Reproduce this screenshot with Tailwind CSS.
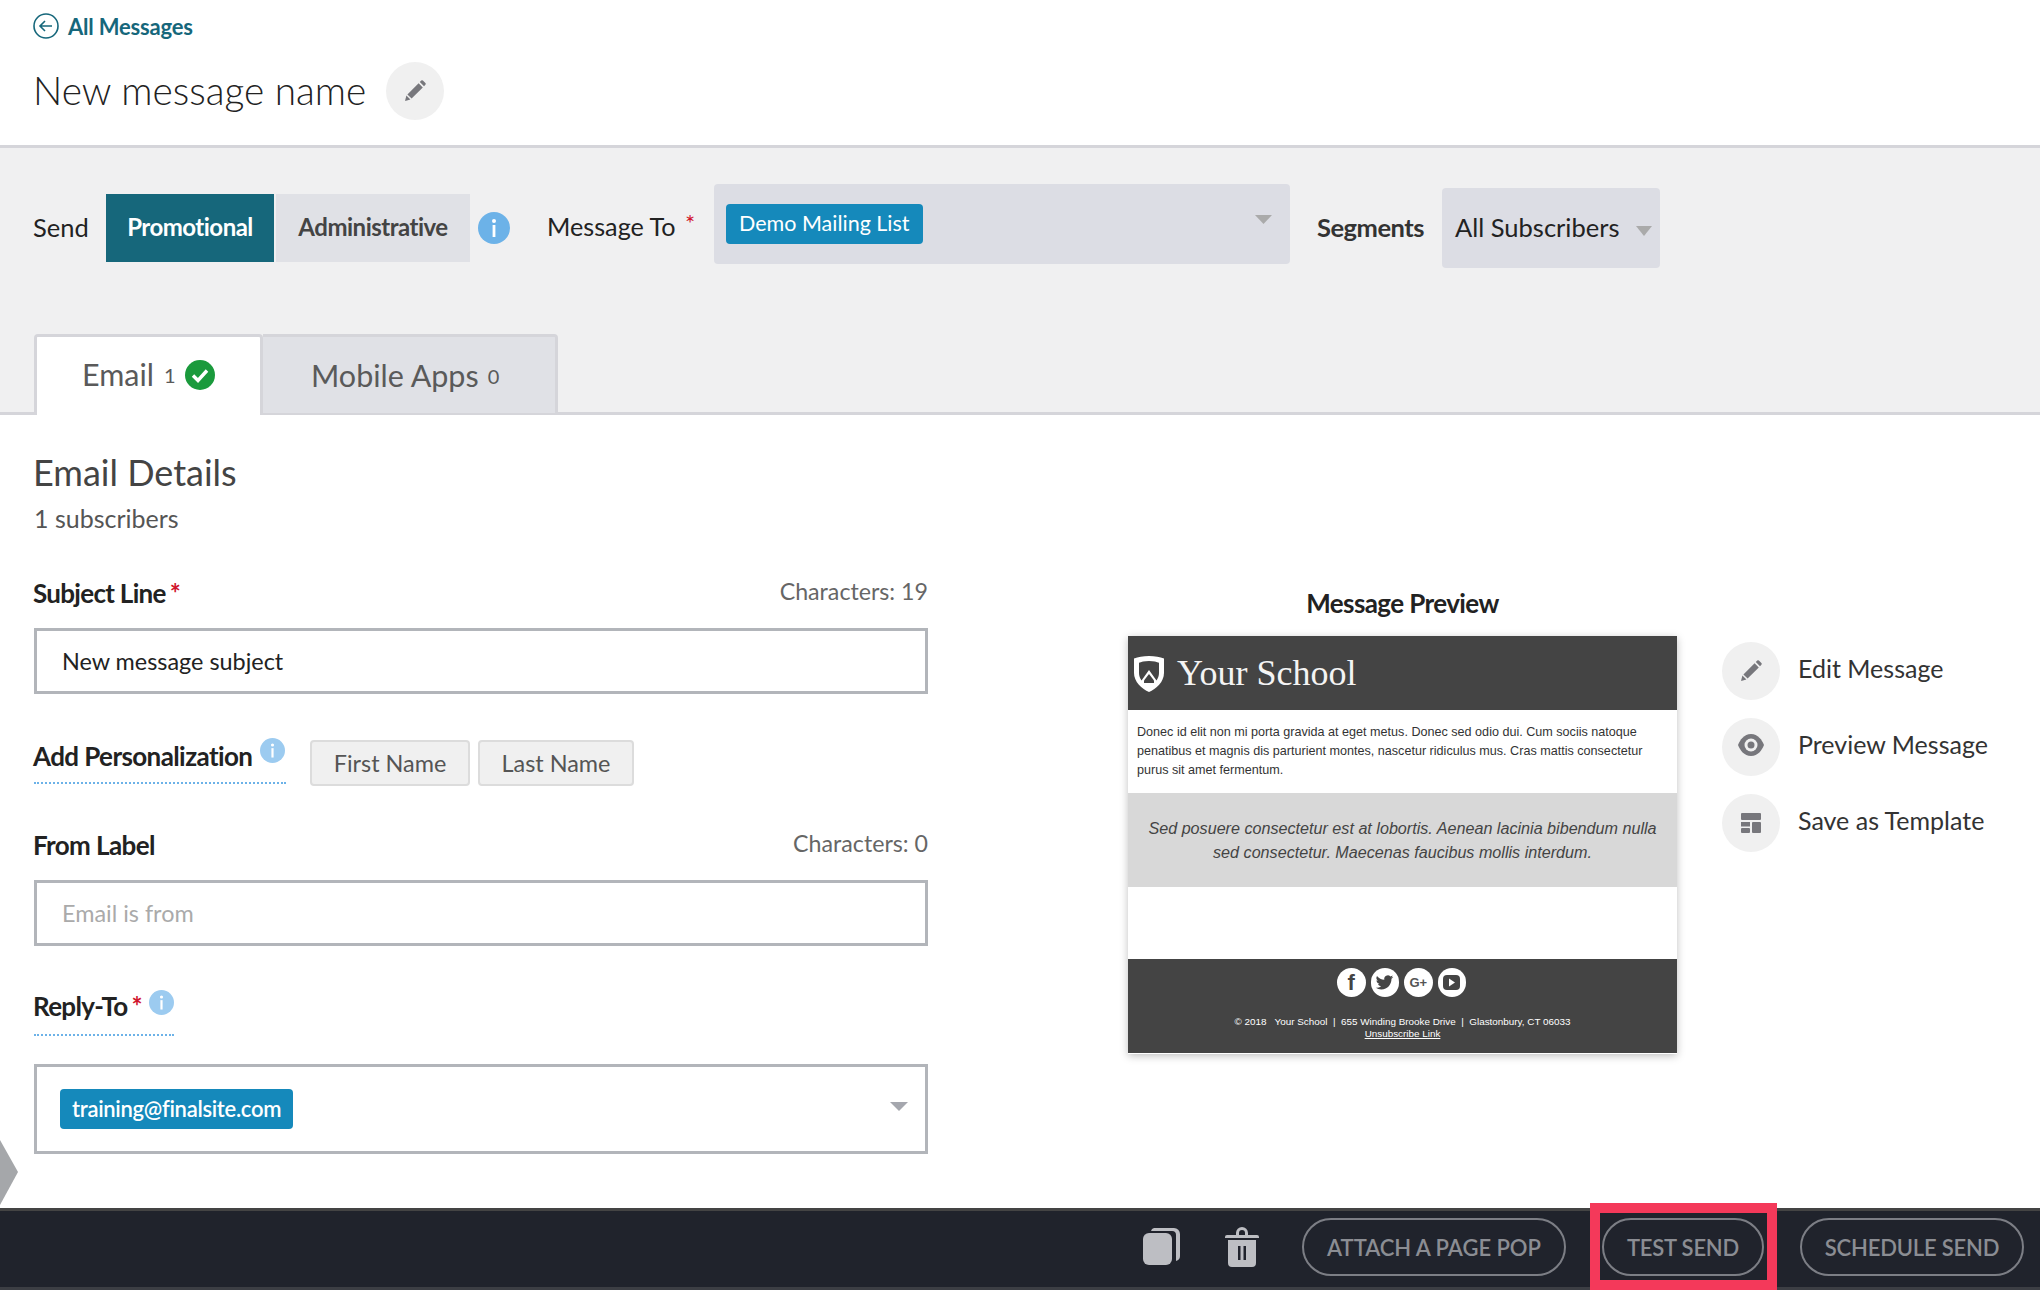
<!DOCTYPE html>
<html lang="en">
  <head>
    <meta charset="UTF-8" />
    <title>New message name</title>
    <script src="https://cdn.jsdelivr.net/npm/@tailwindcss/browser@4"></script>
  </head>
  <body class="bg-white font-['Lato','Liberation_Sans',sans-serif] text-[#333]">
    <div class="relative flex flex-col h-[1290px] overflow-hidden">
      <!-- top title -->
      <header class="h-[148px] shrink-0 border-b-[3px] border-[#d5d5da] pl-[33px]">
        <a class="flex items-center h-[26px] mt-[13px] text-[22px] font-bold text-[#16677b] tracking-[-0.2px]">
          <svg class="w-[26px] h-[26px] mr-[9px]" viewBox="0 0 26 26" fill="none" stroke="#16677b" stroke-width="1.6">
            <circle cx="13" cy="13" r="12" />
            <path d="M19 13H7.5M12 8l-5 5 5 5" />
          </svg>
          All Messages
        </a>
        <div class="flex items-center mt-[23px]">
          <h1 class="text-[38.800px] font-light leading-[58px] text-[#222] w-[353px] whitespace-nowrap -mt-[2px]">New message name</h1>
          <div class="flex items-center justify-center w-[58px] h-[58px] rounded-full bg-[#f0f0f0]">
            <svg class="w-[24px] h-[24px]" viewBox="0 0 24 24" fill="#77777c">
              <path d="M2 22l1.4-5.4 4 4zM4.400 15.400L15.600 4.200l4.200 4.200L8.600 19.600zM16.800 3l1.400-1.400a1.200 1.200 0 0 1 1.700 0l2.500 2.500a1.200 1.200 0 0 1 0 1.700L21 7.200z" />
            </svg>
          </div>
        </div>
      </header>

      <!-- send options -->
      <section class="h-[267px] shrink-0 bg-[#f0f0f1] border-b-[3px] border-[#d5d5da] pt-[40px]">
        <div class="flex items-center h-[80px] pl-[33px] text-[25.500px]">
          <span class="w-[73px] -mt-[2px] text-[#222]">Send</span>
          <div class="flex h-[68px] gap-[2px] text-[24px]">
            <button class="w-[168px] bg-[#16677b] text-white font-bold tracking-[-0.5px] pb-[2px]">Promotional</button>
            <button class="w-[194px] bg-[#e0e1e6] text-[#444] font-bold tracking-[-0.5px] pb-[2px]">Administrative</button>
          </div>
          <svg class="w-[32px] h-[32px] ml-[8px] shrink-0" viewBox="0 0 32 32">
            <circle cx="16" cy="16" r="16" fill="#6cb2e8" />
            <circle cx="16" cy="9" r="2" fill="#fff" />
            <rect x="14.6" y="13" width="2.8" height="12" fill="#fff" />
          </svg>
          <span class="w-[167px] ml-[37px] -mt-[2px] text-[25.200px] text-[#222] whitespace-nowrap">Message To <span class="inline-block text-[#d0142c] text-[24px] leading-none align-top mt-[3px] ml-[3px]">*</span></span>
          <div class="flex items-center justify-between w-[576px] h-[80px] -mt-[8px] pl-[12px] pr-[18px] rounded-[4px] bg-[#dcdde4]">
            <span class="flex items-center h-[40px] px-[13px] pb-[1px] rounded-[4px] bg-[#1589bb] text-white text-[21.500px]">Demo Mailing List</span>
            <svg class="w-[17px] h-[9px] -mt-[10px]" viewBox="0 0 17 9"><path d="M0 0h17L8.5 9z" fill="#aaa" /></svg>
          </div>
          <span class="w-[125px] ml-[27px] -mt-[2px] font-bold text-[#333] tracking-[-0.5px]">Segments</span>
          <div class="flex items-center justify-between w-[218px] h-[80px] pl-[13px] pr-[8px] rounded-[4px] bg-[#dcdde4] text-[#222]">
            <span class="-mt-[2px]">All Subscribers</span>
            <svg class="w-[16px] h-[10px] mt-[6px]" viewBox="0 0 16 10"><path d="M0 0h16L8 10z" fill="#aaa" /></svg>
          </div>
        </div>
        <div class="relative flex mt-[66px] ml-[34px] h-[81px]">
          <div class="flex items-center w-[229px] pl-[45px] pb-[2px] bg-white border-t-[3px] border-x-[3px] border-[#d5d5da] rounded-t-[4px] border-b-0 text-[30.500px] text-[#5a5a5a]">
            Email
            <span class="text-[20px] ml-[10px]">1</span>
            <svg class="w-[30px] h-[30px] ml-[9px]" viewBox="0 0 30 30">
              <circle cx="15" cy="15" r="15" fill="#1a9a3c" />
              <path d="M8 15.5l5 5 9-10" fill="none" stroke="#fff" stroke-width="3.4" />
            </svg>
          </div>
          <div class="flex items-center w-[295px] h-[79px] pl-[48px] pt-[2px] bg-[#e0e1e6] border-t-[3px] border-r-[3px] border-[#d5d5da] rounded-tr-[4px] text-[30.500px] text-[#5a5a5a]">
            Mobile Apps
            <span class="text-[20px] ml-[9px]">0</span>
          </div>
        </div>
      </section>

      <!-- email details -->
      <main class="flex flex-1 pl-[34px]">
        <div class="w-[894px] shrink-0">
          <h2 class="mt-[37px] -ml-[1px] h-[40px] leading-[40px] text-[36px] text-[#444]">Email Details</h2>
          <p class="mt-[11px] h-[30px] leading-[30px] text-[25px] text-[#555]">1 subscribers</p>

          <div class="flex justify-between mt-[45px] h-[30px] leading-[30px]">
            <label class="-ml-[1px] text-[26px] font-bold text-[#222] tracking-[-0.7px]">Subject Line<span class="text-[#d0142c] ml-[4px]">*</span></label>
            <span class="-mt-[2px] text-[23.200px] text-[#666]">Characters: 19</span>
          </div>
          <div class="flex items-center h-[66px] mt-[20px] pl-[25px] pt-[2px] border-[3px] border-[#b2b5ba] text-[23.400px] text-[#222]">New message subject</div>

          <div class="flex mt-[44px] h-[48px]">
            <div class="flex items-start w-[252px] h-[46px] border-b-2 border-dotted border-[#6cb2e8]">
              <span class="-ml-[1px] mt-[2px] leading-[32px] text-[26px] font-bold text-[#222] tracking-[-0.6px] whitespace-nowrap">Add Personalization</span>
              <svg class="w-[25px] h-[25px] ml-[8px] shrink-0" viewBox="0 0 32 32">
                <circle cx="16" cy="16" r="16" fill="#9ccbf0" />
                <circle cx="16" cy="9" r="2" fill="#fff" />
                <rect x="14.6" y="13" width="2.8" height="12" fill="#fff" />
              </svg>
            </div>
            <div class="flex gap-[8px] ml-[24px] mt-[2px] h-[46px] text-[23.400px] text-[#555]">
              <button class="w-[160px] pt-[1px] bg-[#f0f0f0] border-2 border-[#dcdcdc] rounded-[4px]">First Name</button>
              <button class="w-[156px] pt-[1px] bg-[#f0f0f0] border-2 border-[#dcdcdc] rounded-[4px]">Last Name</button>
            </div>
          </div>

          <div class="flex justify-between mt-[44px] h-[30px] leading-[30px]">
            <label class="-ml-[1px] text-[26px] font-bold text-[#222] tracking-[-0.6px]">From Label</label>
            <span class="-mt-[2px] text-[23.200px] text-[#666]">Characters: 0</span>
          </div>
          <div class="flex items-center h-[66px] mt-[20px] pl-[25px] pt-[2px] border-[3px] border-[#b2b5ba] text-[23.400px] text-[#aaa]">Email is from</div>

          <div class="flex items-start w-[140px] h-[46px] mt-[44px] border-b-2 border-dotted border-[#6cb2e8]">
            <label class="-ml-[1px] leading-[32px] text-[26px] font-bold text-[#222] tracking-[-0.7px] whitespace-nowrap">Reply-To<span class="text-[#d0142c] ml-[4px]">*</span></label>
            <svg class="w-[25px] h-[25px] ml-[7px] shrink-0" viewBox="0 0 32 32">
              <circle cx="16" cy="16" r="16" fill="#9ccbf0" />
              <circle cx="16" cy="9" r="2" fill="#fff" />
              <rect x="14.6" y="13" width="2.8" height="12" fill="#fff" />
            </svg>
          </div>
          <div class="flex items-center justify-between h-[90px] mt-[28px] pl-[23px] pr-[17px] border-[3px] border-[#b2b5ba]">
            <span class="flex items-center h-[40px] px-[12px] pb-[2px] rounded-[4px] bg-[#1589bb] text-white text-[22px] font-semibold tracking-[-0.3px]">training@finalsite.com</span>
            <svg class="w-[18px] h-[9px] -mt-[6px]" viewBox="0 0 18 9"><path d="M0 0h18L9 9z" fill="#a5a7ae" /></svg>
          </div>
        </div>

        <!-- preview -->
        <div class="w-[549px] ml-[200px] shrink-0 pt-[173px]">
          <h3 class="h-[30px] leading-[30px] text-center text-[26px] font-bold text-[#222] tracking-[-0.6px]">Message Preview</h3>
          <div class="mt-[18px] h-[418px] bg-white shadow-[0_2px_8px_rgba(0,0,0,0.25)] font-['Liberation_Sans',sans-serif]">
            <div class="flex items-center h-[74px] pl-[5px] bg-[#444]">
              <svg class="w-[32px] h-[38px] mt-[1px]" viewBox="0 0 32 38">
                <path d="M16 1C10 1 5 2 1 3.500V18c0 9 8 16 15 19 7-3 15-10 15-19V3.500C27 2 22 1 16 1z" fill="#fff" />
                <path d="M16 6c-4.600 0-8 1-10 1.800V18c0 3 1 5 2.500 7.500L16 15l7.500 10.500C25 23 26 21 26 18V7.800C24 7 20.600 6 16 6z" fill="#444" />
                <path d="M16 19l5 6.500v2.500h-10v-2.500z" fill="#444" />
              </svg>
              <span class="ml-[12px] font-['Liberation_Serif',serif] text-[36px] text-[#f4f4f4]">Your School</span>
            </div>
            <div class="h-[83px] px-[9px] pt-[13px] text-[12.600px] leading-[19px] text-[#333]">
              Donec id elit non mi porta gravida at eget metus. Donec sed odio dui. Cum sociis natoque penatibus et magnis dis parturient montes, nascetur ridiculus mus. Cras mattis consectetur purus sit amet fermentum.
            </div>
            <div class="h-[94px] px-[12px] pt-[23px] bg-[#d8d8d8] text-center text-[16.150px] leading-[24px] italic text-[#444]">
              Sed posuere consectetur est at lobortis. Aenean lacinia bibendum nulla sed consectetur. Maecenas faucibus mollis interdum.
            </div>
            <div class="h-[72px]"></div>
            <div class="flex flex-col items-center h-[94px] pt-[9px] bg-[#444] text-white text-[9.900px] leading-[12px]">
              <div class="flex gap-[5px] h-[29px] -ml-[2px] text-[#444]">
                <span class="flex items-center justify-center w-[28.500px] h-[29px] rounded-full bg-white text-[22px] font-bold">f</span>
                <span class="flex items-center justify-center w-[28.500px] h-[29px] rounded-full bg-white">
                  <svg class="w-[19px] h-[19px]" viewBox="0 0 24 24" fill="#444"><path d="M23 5a9 9 0 0 1-2.600.7 4.500 4.500 0 0 0 2-2.500 9 9 0 0 1-2.900 1.100 4.500 4.500 0 0 0-7.700 4.100A12.800 12.800 0 0 1 2.500 3.700a4.500 4.500 0 0 0 1.400 6 4.500 4.500 0 0 1-2-.6v.1a4.500 4.500 0 0 0 3.600 4.400 4.500 4.500 0 0 1-2 .1 4.500 4.500 0 0 0 4.200 3.100A9 9 0 0 1 1 18.700 12.700 12.700 0 0 0 7.900 20.700c8.300 0 12.900-6.900 12.900-12.900v-.6A9 9 0 0 0 23 5z" /></svg>
                </span>
                <span class="flex items-center justify-center w-[28.500px] h-[29px] rounded-full bg-white text-[13px] font-bold text-[#555]">G+</span>
                <span class="flex items-center justify-center w-[28.500px] h-[29px] rounded-full bg-white">
                  <svg class="w-[17px] h-[15px]" viewBox="0 0 17 15"><rect width="17" height="15" rx="4" fill="#444" /><path d="M6 3.500l6 4-6 4z" fill="#fff" /></svg>
                </span>
              </div>
              <p class="mt-[19px] whitespace-pre">© 2018   Your School  |  655 Winding Brooke Drive  |  Glastonbury, CT 06033</p>
              <a class="underline">Unsubscribe Link</a>
            </div>
          </div>
        </div>

        <!-- preview actions -->
        <div class="flex flex-col gap-[18px] ml-[45px] pt-[227px] text-[25px] text-[#333]">
          <div class="flex items-center h-[58px]">
            <div class="flex items-center justify-center w-[58px] h-[58px] rounded-full bg-[#f0f0f0]">
              <svg class="w-[24px] h-[24px]" viewBox="0 0 24 24" fill="#77777c"><path d="M2 22l1.400-5.400 4 4zM4.400 15.400L15.600 4.200l4.200 4.200L8.600 19.600zM16.800 3l1.400-1.400a1.200 1.200 0 0 1 1.700 0l2.500 2.500a1.200 1.200 0 0 1 0 1.700L21 7.200z" /></svg>
            </div>
            <span class="ml-[18px] -mt-[5px]">Edit Message</span>
          </div>
          <div class="flex items-center h-[58px]">
            <div class="flex items-center justify-center w-[58px] h-[58px] rounded-full bg-[#f0f0f0]">
              <svg class="w-[26px] h-[22px] -mt-[4px]" viewBox="0 0 26 22">
                <path d="M13 0C6 0 2 6 0 11c2 5 6 11 13 11s11-6 13-11C24 6 20 0 13 0z" fill="#77777c" />
                <circle cx="13" cy="11" r="6.500" fill="#f0f0f0" />
                <circle cx="13" cy="11" r="3.500" fill="#77777c" />
              </svg>
            </div>
            <span class="ml-[18px] -mt-[5px]">Preview Message</span>
          </div>
          <div class="flex items-center h-[58px]">
            <div class="flex items-center justify-center w-[58px] h-[58px] rounded-full bg-[#f0f0f0]">
              <svg class="w-[20px] h-[20px]" viewBox="0 0 20 20" fill="#77777c">
                <rect width="20" height="7" rx="1" />
                <rect y="9" width="9" height="4.500" />
                <rect y="15" width="9" height="5" rx="1" />
                <rect x="11" y="9" width="9" height="11" rx="1" />
              </svg>
            </div>
            <span class="ml-[18px] -mt-[5px]">Save as Template</span>
          </div>
        </div>
      </main>

      <!-- bottom bar -->
      <footer class="flex items-start justify-end h-[82px] shrink-0 pt-[7px] pr-[16px] bg-[#20232c] border-t-[3px] border-b-[3px] border-t-[#444] border-b-[#3c3e44]">
        <svg class="w-[37px] h-[37px] mt-[10px]" viewBox="0 0 37 37" fill="#bdbec3">
          <rect y="5" width="29" height="32" rx="6" />
          <path d="M11 0h20a6 6 0 0 1 6 6v22a5 5 0 0 1-4 5V7a4 4 0 0 0-4-4H8a4 4 0 0 1 3-3z" />
        </svg>
        <svg class="w-[34px] h-[40px] ml-[45px] mt-[9px]" viewBox="0 0 34 40" fill="#bdbec3">
          <path d="M11 8V6a6 6 0 0 1 12 0v2h9a2 2 0 0 1 2 2v1H0v-1a2 2 0 0 1 2-2zm3 0h6V6a3 3 0 0 0-6 0z" />
          <path fill-rule="evenodd" d="M3 13h28v23a4 4 0 0 1-4 4H7a4 4 0 0 1-4-4zm10 6v14h2.500V19zm5.500 0v14H21V19z" />
        </svg>
        <button class="w-[264px] h-[58px] ml-[43px] border-2 border-[#7c7e85] rounded-full text-[22px] font-semibold text-[#8b8d93] tracking-[-0.05px]">ATTACH A PAGE POP</button>
        <div class="relative ml-[36px]">
          <button class="w-[162px] h-[58px] border-2 border-[#7c7e85] rounded-full text-[22px] font-semibold text-[#8b8d93] tracking-[-0.2px]">TEST SEND</button>
          <div class="absolute -left-[12px] -right-[13px] -top-[15px] -bottom-[14px] border-[10px] border-[#f4395a]"></div>
        </div>
        <button class="w-[224px] h-[58px] ml-[36px] border-2 border-[#7c7e85] rounded-full text-[22px] font-semibold text-[#8b8d93] tracking-[-0.2px]">SCHEDULE SEND</button>
      </footer>

      <!-- side handle poking in from the edge -->
      <svg class="absolute left-0 top-[1140px] w-[18px] h-[65px]" viewBox="0 0 18 65"><path d="M0 0l18 32L0 65z" fill="#a5a7aa" /></svg>
    </div>
  </body>
</html>
